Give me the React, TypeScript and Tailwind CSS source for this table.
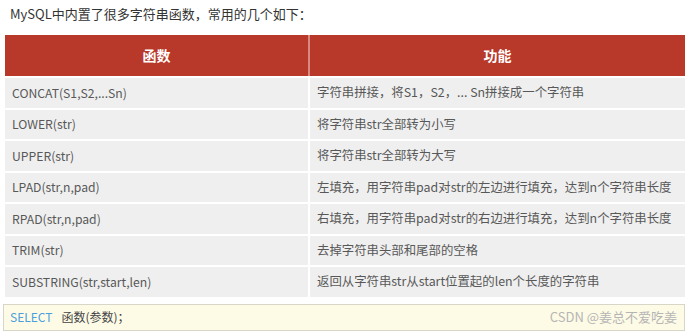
const rows: [string, string][] = [
  ["CONCAT(S1,S2,...Sn)", "字符串拼接，将S1，S2，... Sn拼接成一个字符串"],
  ["LOWER(str)", "将字符串str全部转为小写"],
  ["UPPER(str)", "将字符串str全部转为大写"],
  ["LPAD(str,n,pad)", "左填充，用字符串pad对str的左边进行填充，达到n个字符串长度"],
  ["RPAD(str,n,pad)", "右填充，用字符串pad对str的右边进行填充，达到n个字符串长度"],
  ["TRIM(str)", "去掉字符串头部和尾部的空格"],
  ["SUBSTRING(str,start,len)", "返回从字符串str从start位置起的len个长度的字符串"],
];

export default function App() {
  return (
    <div
      className="w-[685px] h-[332px] overflow-hidden bg-white"
      style={{ fontFamily: '"Noto Sans CJK SC", "Noto Sans", sans-serif' }}
    >
      <p className="pl-[10px] pt-[4px] h-[35px] text-[13px] leading-[20px] text-[#333]">
        MySQL中内置了很多字符串函数，常用的几个如下：
      </p>

      <div className="ml-[5px] w-[680px] flex flex-col gap-[2px] bg-white">
        <div className="grid grid-cols-[305px_1fr] h-[41px] bg-[#b8382a] text-white text-[14px] font-bold">
          <div className="flex items-center justify-center border-r-2 border-[#d98a80]">函数</div>
          <div className="flex items-center justify-center">功能</div>
        </div>
        {rows.map(([fn, desc]) => (
          <div
            key={fn}
            className="grid grid-cols-[305px_1fr] h-[29.5px] text-[#585858] bg-[#efefef] whitespace-nowrap"
          >
            <div className="flex items-center pl-[7px] border-r-2 border-white text-[12.2px]">{fn}</div>
            <div className="flex items-center pl-[7px] text-[12.4px]">{desc}</div>
          </div>
        ))}
      </div>

      <div className="mt-[7px] ml-[3px] h-[27px] flex items-center justify-between border border-[#d8d6c8] bg-[#fdfbe6] pl-[6px] pr-[7px] text-[12px]">
        <span>
          <span className="text-[#4aa0dd]">SELECT</span>
          <span className="ml-[9px] text-[#444]">函数(参数)；</span>
        </span>
        <span className="text-[13px] text-[#b5b5b5]">CSDN @姜总不爱吃姜</span>
      </div>
    </div>
  );
}
